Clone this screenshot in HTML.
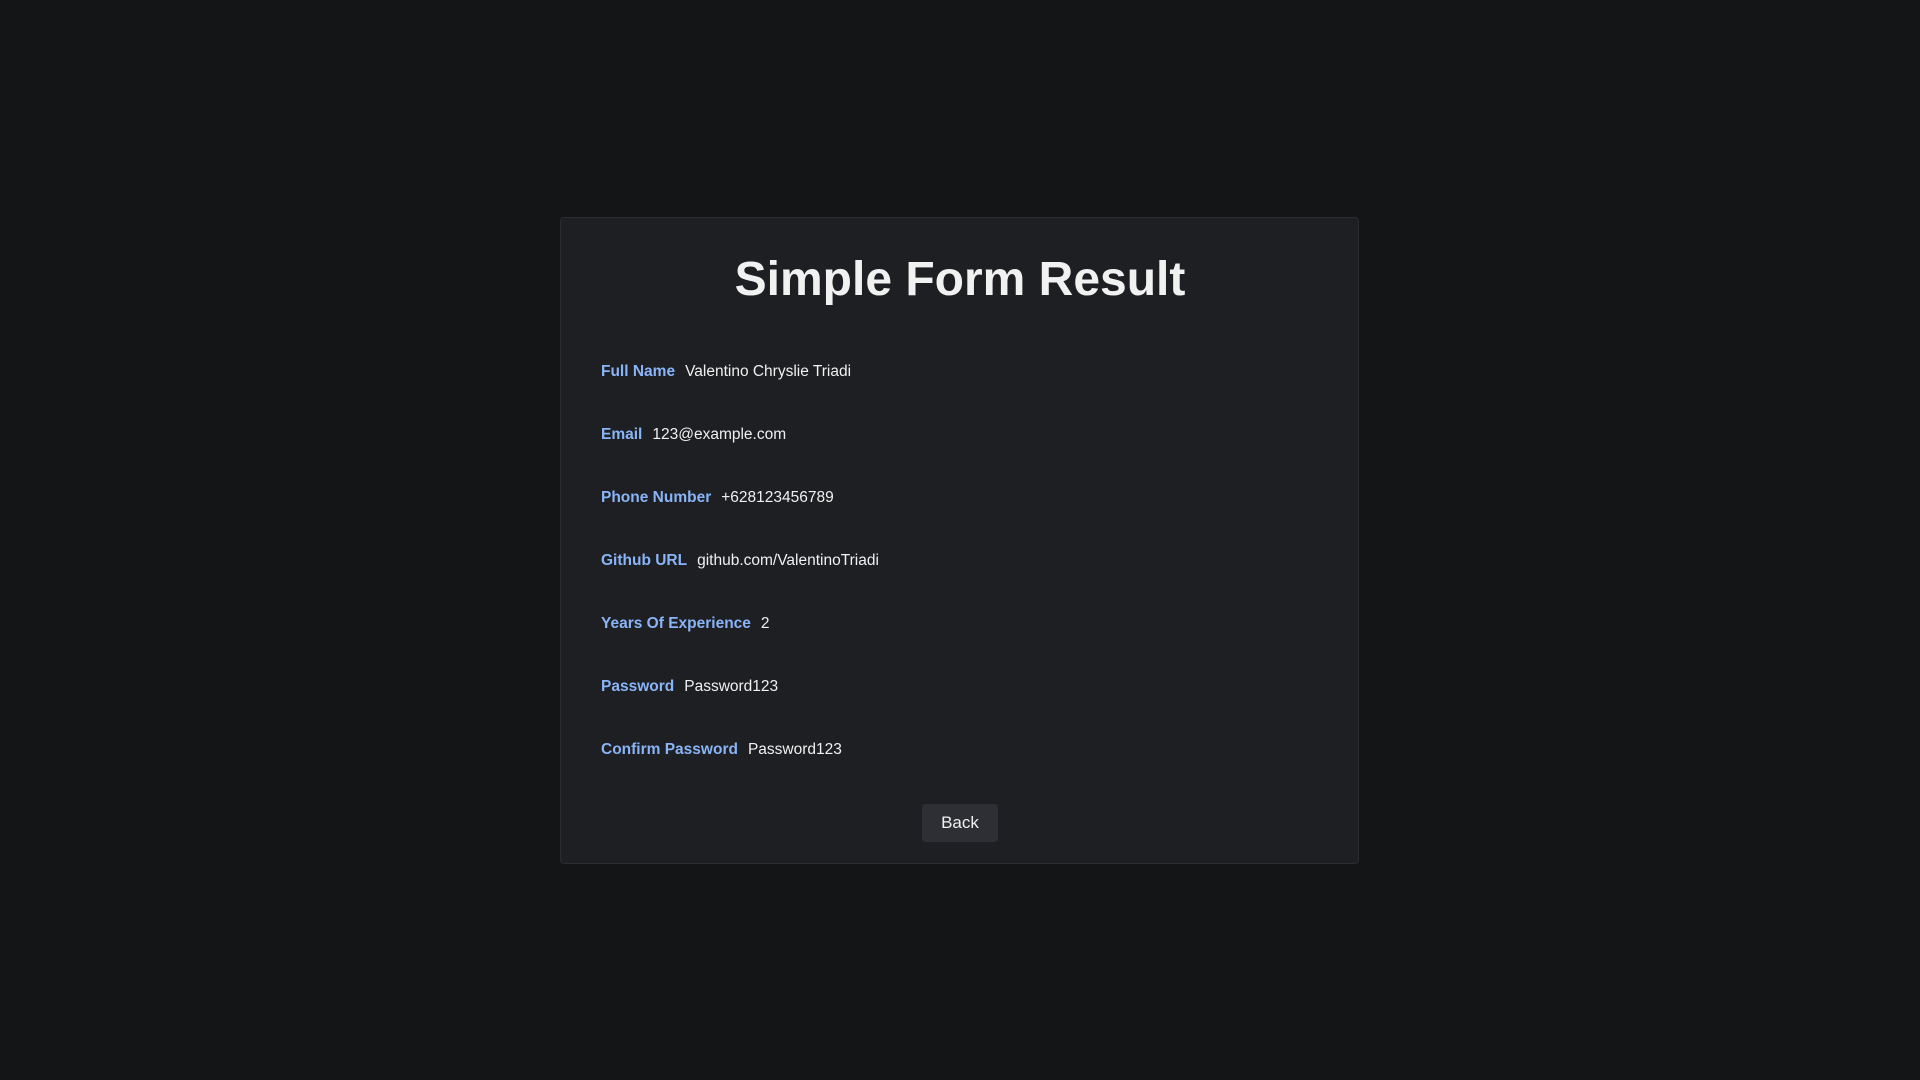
<!DOCTYPE html>
<html><head><meta charset="utf-8"><style>
html,body{margin:0;padding:0;width:1920px;height:1080px;overflow:hidden;background:#141517;font-family:"Liberation Sans",sans-serif}
.card{position:absolute;left:560px;top:217px;width:799px;height:647px;background:#1e1f22;border:1px solid #2b2c2f;border-radius:4px;box-sizing:border-box}
h1{position:absolute;left:0;right:0;top:250px;margin:0;text-align:center;color:#f1f1f1;font-size:48px;font-weight:bold;line-height:60px}
.row{position:absolute;left:601px;font-size:15.5px;color:#f0f0f0;line-height:20px}
.row b{color:#8ab4f8;margin-right:10px}
.btn{position:absolute;left:922px;top:804px;width:76px;height:38px;background:#2e2f34;border-radius:4px;color:#f0f0f0;font-size:17px;text-align:center;line-height:38px}
</style></head><body>
<div class="card"></div>
<h1>Simple Form Result</h1>
<div class="row" style="top:362px"><b>Full Name</b>Valentino Chryslie Triadi</div>
<div class="row" style="top:425px"><b>Email</b>123@example.com</div>
<div class="row" style="top:488px"><b>Phone Number</b>+628123456789</div>
<div class="row" style="top:551px"><b>Github URL</b>github.com/ValentinoTriadi</div>
<div class="row" style="top:614px"><b>Years Of Experience</b>2</div>
<div class="row" style="top:677px"><b>Password</b>Password123</div>
<div class="row" style="top:740px"><b>Confirm Password</b>Password123</div>
<div class="btn">Back</div>
</body></html>
